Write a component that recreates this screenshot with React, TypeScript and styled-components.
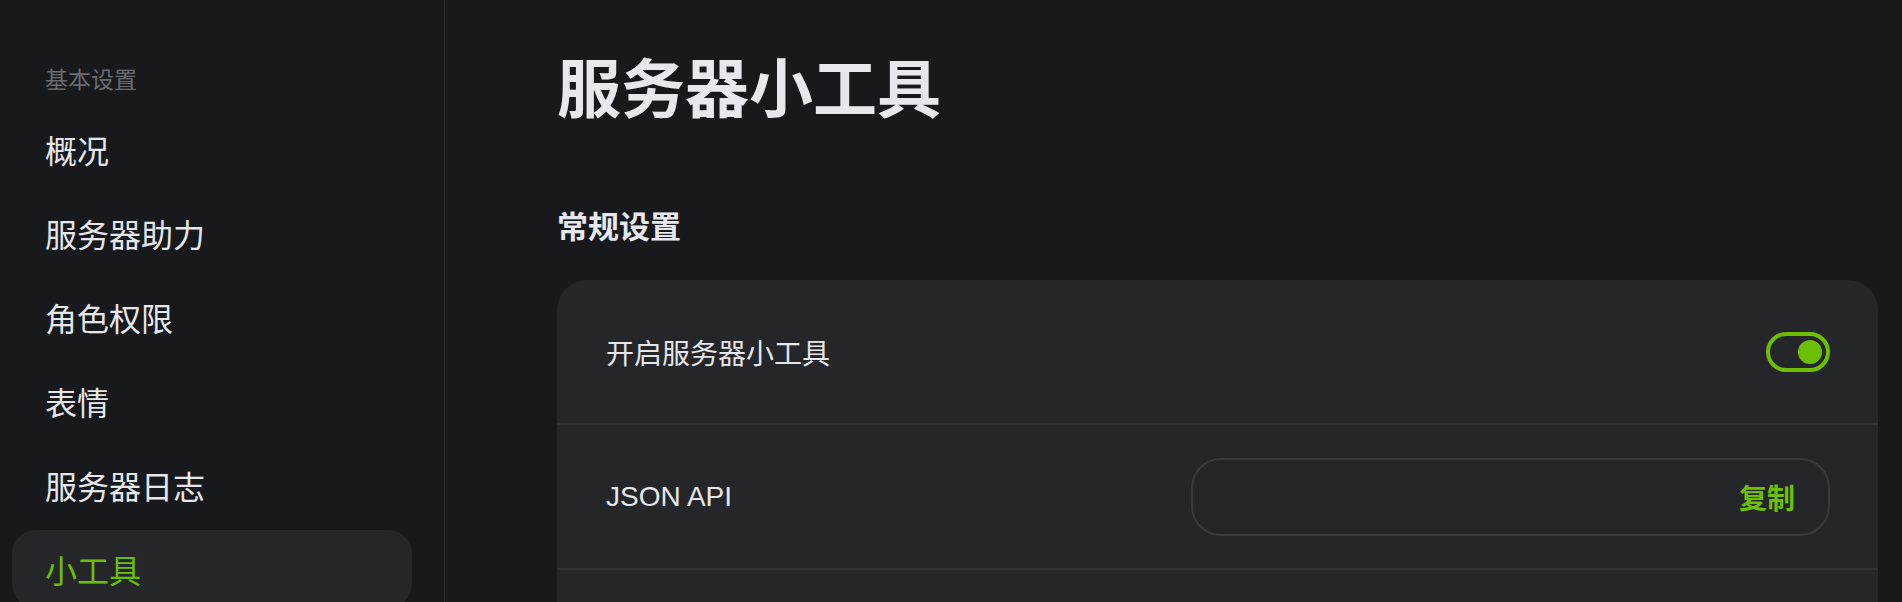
import React from 'react';
import styled, {createGlobalStyle} from 'styled-components';

const green = '#6dbf06';

const GlobalStyle = createGlobalStyle`
	html, body {
		margin: 0;
		padding: 0;
		background: #18191c;
		overflow: hidden;
	}
	body {
		font-family: 'Liberation Sans', 'Noto Sans CJK SC', sans-serif;
		color: #e5e7eb;
	}
	* {
		box-sizing: border-box;
	}
`;

const Layout = styled.div`
	display: flex;
	height: 100vh;
`;

const Sidebar = styled.nav`
	width: 445px;
	flex-shrink: 0;
	border-right: 1px solid #2a2b2f;
	padding: 62px 32px 0 12px;
	display: flex;
	flex-direction: column;
	gap: 6px;
`;

const GroupLabel = styled.div`
	padding-left: 33px;
	font-size: 23px;
	line-height: 32px;
	color: #6b6c71;
	margin-bottom: 10px;
	font-family: 'Noto Sans CJK SC', sans-serif;
`;

const NavItem = styled.div<{$active?: boolean}>`
	height: 78px;
	flex-shrink: 0;
	display: flex;
	align-items: center;
	padding-left: 33px;
	border-radius: 24px;
	font-size: 32px;
	font-family: 'Noto Sans CJK SC', sans-serif;
	color: ${({$active}) => ($active ? green : '#e5e7eb')};
	background: ${({$active}) => ($active ? '#25262a' : 'transparent')};
`;

const Main = styled.main`
	flex: 1;
	padding: 46px 24px 0 112px;
	min-width: 0;
`;

const Title = styled.h1`
	margin: 0;
	font-size: 64px;
	line-height: 76px;
	font-weight: 700;
	font-family: 'Noto Sans CJK SC', sans-serif;
	color: #e6e8ed;
`;

const SectionTitle = styled.h2`
	margin: 83px 0 35px;
	font-size: 31px;
	line-height: 40px;
	font-weight: 700;
	font-family: 'Noto Sans CJK SC', sans-serif;
	color: #e6e8ed;
`;

const Card = styled.section`
	background: #25262a;
	border-radius: 30px;
	min-height: 440px;
`;

const Row = styled.div`
	height: 145px;
	padding: 0 48px 0 49px;
	display: flex;
	align-items: center;
	justify-content: space-between;
	border-bottom: 2px solid #303136;
`;

const RowLabel = styled.span`
	font-size: 28px;
	color: #e5e7eb;
`;

const Toggle = styled.div<{$on?: boolean}>`
	width: 64px;
	height: 40px;
	border-radius: 20px;
	border: 4px solid ${green};
	padding: 4px;
	display: flex;
	justify-content: ${({$on}) => ($on ? 'flex-end' : 'flex-start')};
`;

const Knob = styled.div`
	width: 24px;
	height: 24px;
	border-radius: 50%;
	background: ${green};
`;

const CopyField = styled.div`
	width: 639px;
	height: 78px;
	border: 2px solid #3a3b40;
	border-radius: 30px;
	display: flex;
	align-items: center;
	justify-content: flex-end;
	padding-right: 33px;
`;

const CopyButton = styled.button`
	background: none;
	border: 0;
	padding: 0;
	color: ${green};
	font-size: 28px;
	font-weight: 700;
	font-family: 'Noto Sans CJK SC', sans-serif;
	cursor: pointer;
`;

const navItems = ['概况', '服务器助力', '角色权限', '表情', '服务器日志', '小工具'];

export default function App() {
	return (
		<>
			<GlobalStyle />
			<Layout>
				<Sidebar>
					<GroupLabel>基本设置</GroupLabel>
					{navItems.map((item) => (
						<NavItem key={item} $active={item === '小工具'}>
							{item}
						</NavItem>
					))}
				</Sidebar>
				<Main>
					<Title>服务器小工具</Title>
					<SectionTitle>常规设置</SectionTitle>
					<Card>
						<Row>
							<RowLabel>开启服务器小工具</RowLabel>
							<Toggle $on>
								<Knob />
							</Toggle>
						</Row>
						<Row>
							<RowLabel>JSON API</RowLabel>
							<CopyField>
								<CopyButton>复制</CopyButton>
							</CopyField>
						</Row>
						<Row />
					</Card>
				</Main>
			</Layout>
		</>
	);
}
